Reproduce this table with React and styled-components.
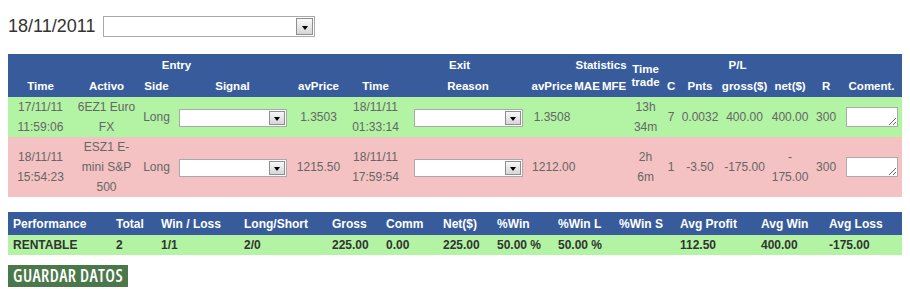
import React from "react";
import styled, { createGlobalStyle } from "styled-components";

const Global = createGlobalStyle`
  body {
    margin: 8px;
    background: #ffffff;
    font-family: "Liberation Sans", Arial, sans-serif;
  }
`;

const BLUE = "#385c9b";
const GREEN = "#b2f3a4";
const PINK = "#f4c2c2";

const Page = styled.div`
  display: flex;
  flex-direction: column;
  align-items: flex-start;
`;

const DateBar = styled.div`
  display: flex;
  align-items: center;
  gap: 8px;
  margin-top: 8px;
  height: 21px;
`;

const DateLabel = styled.span`
  font-size: 18px;
  color: #333;
  line-height: 21px;
`;

const SelectWrap = styled.span`
  position: relative;
  display: inline-block;
  vertical-align: middle;
  width: ${(p) => p.$w}px;
  height: ${(p) => p.$h}px;
`;

const NativeSelect = styled.select`
  appearance: none;
  -webkit-appearance: none;
  display: block;
  box-sizing: border-box;
  width: 100%;
  height: 100%;
  margin: 0;
  padding: 0;
  border: 1px solid #a9a9ab;
  background: #ffffff;
  font: 12px "Liberation Sans", Arial, sans-serif;
`;

const ArrowBox = styled.span`
  position: absolute;
  top: 2px;
  right: 2px;
  bottom: 2px;
  width: ${(p) => p.$bw}px;
  box-sizing: border-box;
  border: 1px solid #8f8f91;
  background: linear-gradient(#f8f8f8, #d6d6d6);
  display: flex;
  align-items: center;
  justify-content: center;
  padding-top: 2px;
  pointer-events: none;

  &::after {
    content: "";
    border-left: 3.5px solid transparent;
    border-right: 3.5px solid transparent;
    border-top: 4px solid #000;
  }
`;

const Dropdown = ({ w, h, bw = 15 }) => (
  <SelectWrap $w={w} $h={h}>
    <NativeSelect aria-label="select">
      <option value=""></option>
    </NativeSelect>
    <ArrowBox $bw={bw} />
  </SelectWrap>
);

const Grid = styled.table`
  border-collapse: collapse;
  border-spacing: 0;
  table-layout: fixed;
  width: 895px;
  margin-top: ${(p) => p.$mt}px;
`;

const Head = styled.th`
  background: ${BLUE};
  color: #ffffff;
  font-size: 11.5px;
  font-weight: bold;
  padding: 0;
  text-align: center;
  vertical-align: middle;
  white-space: ${(p) => (p.$wrap ? "normal" : "nowrap")};
  height: ${(p) => p.$h || 0}px;
  line-height: ${(p) => (p.$wrap ? "13px" : "14px")};
`;

const Row = styled.tr`
  background: ${(p) => (p.$tone === "loss" ? PINK : GREEN)};
`;

const Cell = styled.td`
  padding: 0 2px;
  font-size: 12px;
  color: #666;
  line-height: 20px;
  text-align: center;
  vertical-align: middle;
`;

const CommentBox = styled.textarea`
  box-sizing: border-box;
  width: 52px;
  height: 20px;
  margin: 0;
  padding: 0;
  border: 1px solid #ababab;
  vertical-align: middle;
  font: 12px "Liberation Sans", Arial, sans-serif;
`;

const SumHead = styled.th`
  background: ${BLUE};
  color: #ffffff;
  font-size: 12px;
  font-weight: bold;
  text-align: left;
  padding: 0 0 0 5px;
  height: 23px;
  white-space: nowrap;
`;

const SumCell = styled.td`
  background: ${GREEN};
  color: #333;
  font-size: 12px;
  font-weight: bold;
  text-align: left;
  padding: 0 0 0 5px;
  height: 20px;
  white-space: nowrap;
`;

const SaveButton = styled.button`
  margin-top: 10px;
  height: 22px;
  padding: 0 5px;
  border: none;
  background: #4b784a;
  color: #ffffff;
  font-family: "Liberation Sans Narrow", "Arial Narrow", "Open Sans", sans-serif;
  font-stretch: 82%;
  font-weight: 600;
  font-size: 17px;
  letter-spacing: 0.4px;
  line-height: 22px;
  cursor: pointer;
`;

const mainCols = [65, 67, 33, 119, 53, 61, 124, 44, 26, 28, 35, 16, 42, 47, 44, 28, 63];
const sumCols = [103, 45, 83, 88, 54, 57, 54, 61, 61, 61, 81, 68, 79];

const trades = [
  {
    tone: "win",
    inTime: ["17/11/11", "11:59:06"],
    activo: "6EZ1 Euro FX",
    side: "Long",
    inPrice: "1.3503",
    outTime: ["18/11/11", "01:33:14"],
    outPrice: "1.3508",
    dur: "13h 34m",
    c: "7",
    pnts: "0.0032",
    gross: "400.00",
    net: ["400.00"],
    r: "300",
  },
  {
    tone: "loss",
    inTime: ["18/11/11", "15:54:23"],
    activo: "ESZ1 E-mini S&P 500",
    side: "Long",
    inPrice: "1215.50",
    outTime: ["18/11/11", "17:59:54"],
    outPrice: "1212.00",
    dur: "2h 6m",
    c: "1",
    pnts: "-3.50",
    gross: "-175.00",
    net: ["-", "175.00"],
    r: "300",
  },
];

const lines = (arr) =>
  arr.map((t, i) => (
    <React.Fragment key={i}>
      {i > 0 && <br />}
      {t}
    </React.Fragment>
  ));

const sumHeads = [
  "Performance",
  "Total",
  "Win / Loss",
  "Long/Short",
  "Gross",
  "Comm",
  "Net($)",
  "%Win",
  "%Win L",
  "%Win S",
  "Avg Profit",
  "Avg Win",
  "Avg Loss",
];
const sumVals = [
  "RENTABLE",
  "2",
  "1/1",
  "2/0",
  "225.00",
  "0.00",
  "225.00",
  "50.00 %",
  "50.00 %",
  "",
  "112.50",
  "400.00",
  "-175.00",
];

export default function App() {
  return (
    <>
      <Global />
      <Page>
        <DateBar>
          <DateLabel>18/11/2011</DateLabel>
          <Dropdown w={212} h={21} bw={17} />
        </DateBar>

        <Grid $mt={17}>
          <colgroup>
            {mainCols.map((w, i) => (
              <col key={i} style={{ width: w }} />
            ))}
          </colgroup>
          <thead>
            <tr>
              <Head colSpan={5} $h={21}>Entry</Head>
              <Head colSpan={3}>Exit</Head>
              <Head colSpan={2}>Statistics</Head>
              <Head rowSpan={2} $wrap>
                Time trade
              </Head>
              <Head colSpan={4}>P/L</Head>
              <Head />
              <Head />
            </tr>
            <tr>
              <Head $h={22}>Time</Head>
              <Head>Activo</Head>
              <Head>Side</Head>
              <Head>Signal</Head>
              <Head>avPrice</Head>
              <Head>Time</Head>
              <Head>Reason</Head>
              <Head>avPrice</Head>
              <Head>MAE</Head>
              <Head>MFE</Head>
              <Head>C</Head>
              <Head>Pnts</Head>
              <Head>gross($)</Head>
              <Head>net($)</Head>
              <Head>R</Head>
              <Head>Coment.</Head>
            </tr>
          </thead>
          <tbody>
            {trades.map((t, i) => (
              <Row key={i} $tone={t.tone}>
                <Cell>{lines(t.inTime)}</Cell>
                <Cell>{t.activo}</Cell>
                <Cell>{t.side}</Cell>
                <Cell>
                  <Dropdown w={108} h={18} bw={16} />
                </Cell>
                <Cell>{t.inPrice}</Cell>
                <Cell>{lines(t.outTime)}</Cell>
                <Cell>
                  <Dropdown w={109} h={18} bw={16} />
                </Cell>
                <Cell>{t.outPrice}</Cell>
                <Cell />
                <Cell />
                <Cell>{t.dur}</Cell>
                <Cell>{t.c}</Cell>
                <Cell>{t.pnts}</Cell>
                <Cell>{t.gross}</Cell>
                <Cell>{lines(t.net)}</Cell>
                <Cell>{t.r}</Cell>
                <Cell>
                  <CommentBox aria-label="comentario" />
                </Cell>
              </Row>
            ))}
          </tbody>
        </Grid>

        <Grid $mt={15}>
          <colgroup>
            {sumCols.map((w, i) => (
              <col key={i} style={{ width: w }} />
            ))}
          </colgroup>
          <thead>
            <tr>
              {sumHeads.map((h) => (
                <SumHead key={h}>{h}</SumHead>
              ))}
            </tr>
          </thead>
          <tbody>
            <tr>
              {sumVals.map((v, i) => (
                <SumCell key={i}>{v}</SumCell>
              ))}
            </tr>
          </tbody>
        </Grid>

        <SaveButton type="button">GUARDAR DATOS</SaveButton>
      </Page>
    </>
  );
}
